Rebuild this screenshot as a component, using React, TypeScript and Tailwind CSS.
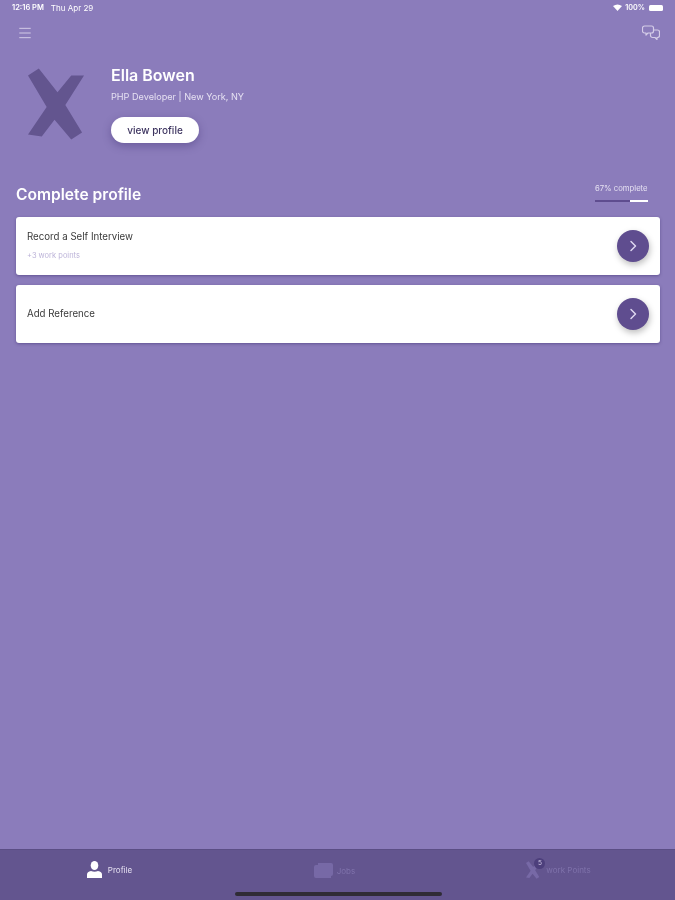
import { Menu } from 'lucide-react';

const Chevron = () => (
  <svg width="10" height="12" viewBox="0 0 10 12" fill="none" stroke="#ddd6f0" strokeWidth="1.5" strokeLinecap="round" strokeLinejoin="round">
    <path d="M3 1.500l4.500 4.500-4.500 4.500" />
  </svg>
);

const XMark = ({ className, fill }: { className: string; fill: string }) => (
  <svg className={className} viewBox="0 0 58 72" fill={fill}>
    <path d="M0 7 L11 0 L30 24 L44 7 L57 7 L38 37 L55 65 L44 72 L27 52 L14 69 L0 67 L19 39 Z" />
  </svg>
);

const ChatIcon = () => (
  <svg width="18" height="16" viewBox="0 0 18 16" fill="none" stroke="#d5cde8" strokeWidth="1.2" strokeLinejoin="round">
    <path d="M2.500 1h7a2 2 0 0 1 2 2v3a2 2 0 0 1-2 2H6l-2 2V8H2.500a2 2 0 0 1-2-2V3a2 2 0 0 1 2-2z" />
    <path d="M11.500 5h4a2 2 0 0 1 2 2v3.500a2 2 0 0 1-2 2H15v2l-2-2h-2.500a2 2 0 0 1-2-2V8" />
  </svg>
);

const tasks = [
  { title: 'Record a Self Interview', sub: '+3 work points' },
  { title: 'Add Reference', sub: null },
];

const App = () => {
  return (
    <div className="w-[675px] h-[900px] bg-[#8b7cbb] flex flex-col overflow-hidden text-white font-['Inter',sans-serif] blur-[0.4px]">
      {/* Status bar */}
      <div className="h-[16px] px-[12px] flex items-center justify-between text-[7.200px] shrink-0">
        <div className="flex items-center gap-[7px]">
          <span className="font-semibold text-[7.500px]">12:16 PM</span>
          <span className="text-[8px]">Thu Apr 29</span>
        </div>
        <div className="flex items-center gap-[3px] font-semibold">
          <svg width="9" height="7" viewBox="0 0 9 7" fill="white">
            <path d="M0 2 Q4.500 -1 9 2 L4.500 7 Z" />
          </svg>
          <span>100%</span>
          <div className="w-[14px] h-[6px] rounded-[1.500px] bg-white ml-[1px]" />
        </div>
      </div>

      {/* Header */}
      <div className="h-[34px] pl-[17px] pr-[15px] flex items-center justify-between shrink-0">
        <Menu size={16} color="#d8d1ea" strokeWidth={1.4} />
        <ChatIcon />
      </div>

      {/* Profile */}
      <div className="flex pl-[28px] mt-[18px] h-[72px] shrink-0">
        <XMark className="w-[57px] h-[72px]" fill="#63558f" />
        <div className="ml-[26px] -mt-[3px] flex flex-col items-start">
          <div className="text-[16px] leading-[20px] font-semibold shrink-0">Ella Bowen</div>
          <div className="text-[9.150px] leading-[12px] mt-[6px] text-[#e6e1f2] shrink-0">PHP Developer | New York, NY</div>
          <button className="mt-[14px] w-[88px] h-[26px] shrink-0 rounded-full bg-white text-[#3e3560] text-[10px] font-medium shadow-[0_3px_8px_rgba(60,45,110,0.4)]">
            view profile
          </button>
        </div>
      </div>

      {/* Complete profile */}
      <div className="flex items-start justify-between pl-[16px] pr-[27px] mt-[45px] shrink-0">
        <div className="text-[15.600px] leading-[20px] font-semibold">Complete profile</div>
        <div className="flex flex-col items-stretch w-[53px] -mt-[1px]">
          <div className="text-[7.700px] leading-[10px] whitespace-nowrap text-[#e6e1f2]">67% complete</div>
          <div className="flex h-[2px] mt-[6px]">
            <div className="w-[35px] bg-[#5f4d8f]" />
            <div className="flex-1 bg-white" />
          </div>
        </div>
      </div>

      {/* Task cards */}
      <div className="flex flex-col gap-[10px] pl-[16px] pr-[15px] mt-[12px] shrink-0">
        {tasks.map(task => (
          <div
            key={task.title}
            className="h-[58px] bg-white rounded-[3px] flex items-center justify-between pl-[11px] pr-[11px] shadow-[0_1px_3px_rgba(60,45,110,0.5)]"
          >
            <div className="flex flex-col">
              <div className="text-[9.700px] leading-[12px] text-[#3a3a3a]">{task.title}</div>
              {task.sub && <div className="text-[7.500px] leading-[10px] mt-[8px] text-[#bcb3d8]">{task.sub}</div>}
            </div>
            <div className="w-[32px] h-[32px] rounded-full bg-[#5f4d8f] flex items-center justify-center shadow-[1px_3px_6px_rgba(0,0,0,0.25)]">
              <Chevron />
            </div>
          </div>
        ))}
      </div>

      <div className="flex-1" />

      {/* Tab bar */}
      <div className="relative h-[51px] bg-[#63558f] border-t border-[#5b4e85] shrink-0 flex items-start text-[8px]">
        <div className="w-[225px] flex items-center justify-center gap-[6px] pt-[11px] pr-[6px]">
          <svg width="15" height="17" viewBox="0 0 15 17" fill="white">
            <ellipse cx="7.500" cy="4.500" rx="3.800" ry="4.500" />
            <path d="M0 17 V13.500 Q0 10.500 4 10 Q7.500 11.500 11 10 Q15 10.500 15 13.500 V17 Z" />
          </svg>
          <span className="text-[#e6e1f2]">Profile</span>
        </div>
        <div className="w-[225px] flex items-center justify-center gap-[4px] pt-[13px] pr-[6px] text-[#7f72ab]">
          <svg width="19" height="15" viewBox="0 0 19 15" fill="#7769a6">
            <path d="M0 4 Q0 2 2 2 H4 V0 H17 Q19 0 19 2 V11 Q19 13 17 13 V15 H2 Q0 15 0 13 Z" />
          </svg>
          <span>Jobs</span>
        </div>
        <div className="w-[225px] flex items-center justify-center gap-[1px] pt-[11px] pr-[8px] text-[#7f72ab]">
          <div className="relative w-[16px] h-[18px]">
            <XMark className="w-[14px] h-[18px]" fill="#7769a6" />
            <div className="absolute -top-[3px] left-[8px] w-[11px] h-[11px] rounded-full bg-[#4d3f7c] text-[#cfc7e4] text-[6.500px] flex items-center justify-center">
              5
            </div>
          </div>
          <span className="ml-[3px]">work Points</span>
        </div>
        <div className="absolute left-[235px] top-[42px] w-[207px] h-[3.500px] rounded-full bg-[#2f2b35]" />
      </div>
    </div>
  );
};

export default App;
